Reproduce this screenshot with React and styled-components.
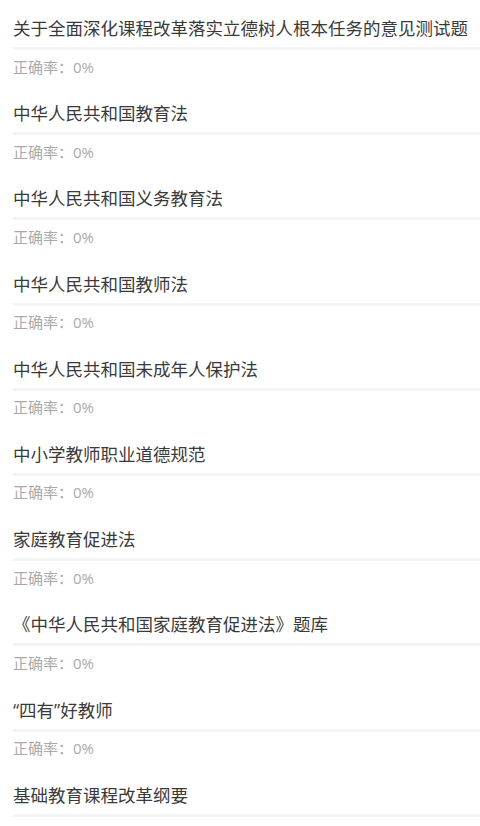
import React from "react";
import styled, { createGlobalStyle } from "styled-components";

const GlobalStyle = createGlobalStyle`
  html, body {
    margin: 0;
    padding: 0;
    background: #ffffff;
  }
  body {
    font-family: "Open Sans", "Noto Sans CJK SC", sans-serif;
  }
`;

const List = styled.div`
  display: flex;
  flex-direction: column;
  padding-left: 13px;
`;

const Item = styled.div`
  display: flex;
  flex-direction: column;
  height: 85.2px;
  box-sizing: border-box;
  padding-top: 16px;
`;

const Title = styled.div`
  font-size: 17.5px;
  line-height: 24px;
  color: #3a3a3a;
  white-space: nowrap;
  overflow: hidden;
`;

const Track = styled.div`
  margin-top: 7px;
  height: 3px;
  background: #f4f4f4;
  overflow: hidden;
`;

const Fill = styled.div`
  height: 100%;
  background: #4a90e2;
`;

const Rate = styled.div`
  margin-top: 6.5px;
  font-size: 15px;
  line-height: 20px;
  color: #aaaaaa;
`;

const items = [
  "关于全面深化课程改革落实立德树人根本任务的意见测试题",
  "中华人民共和国教育法",
  "中华人民共和国义务教育法",
  "中华人民共和国教师法",
  "中华人民共和国未成年人保护法",
  "中小学教师职业道德规范",
  "家庭教育促进法",
  "《中华人民共和国家庭教育促进法》题库",
  "“四有”好教师",
  "基础教育课程改革纲要",
];

export default function App() {
  return (
    <>
      <GlobalStyle />
      <List>
        {items.map((t) => (
          <Item key={t}>
            <Title>{t}</Title>
            <Track>
              <Fill style={{ width: "0%" }} />
            </Track>
            <Rate>正确率：0%</Rate>
          </Item>
        ))}
      </List>
    </>
  );
}
